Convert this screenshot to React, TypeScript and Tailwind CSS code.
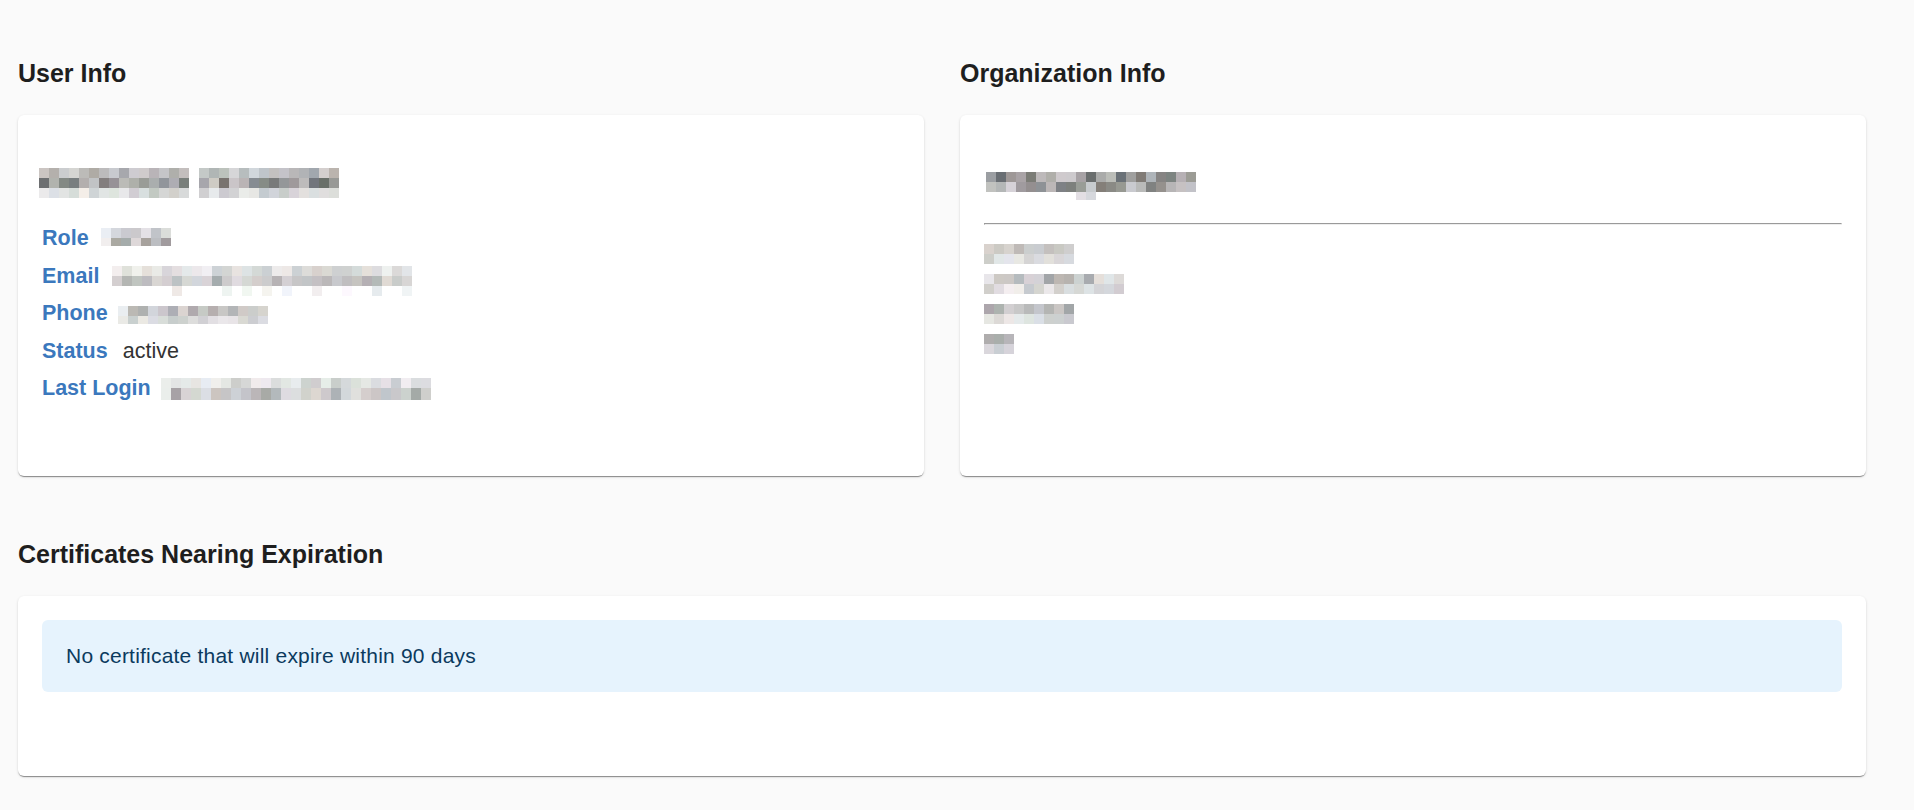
import React from "react";

function rng(seed: number) {
  let s = seed;
  return () => {
    s = (s * 9301 + 49297) % 233280;
    return s / 233280;
  };
}

type RowSpec = { h: number; lo: number; hi: number; p?: number; from?: number; to?: number; faintFirst?: boolean };

function Pix({ cols, rows, seed, gaps = [] }: { cols: number; rows: RowSpec[]; seed: number; gaps?: number[] }) {
  const r = rng(seed);
  const rects: React.ReactNode[] = [];
  let y = 0;
  rows.forEach((row, ri) => {
    for (let c = 0; c < cols; c++) {
      const v = row.lo + (row.hi - row.lo) * r();
      const t1 = r();
      const t2 = r();
      const pr = r();
      const from = row.from ?? 0;
      const to = row.to ?? cols;
      if (c < from || c >= to) continue;
      if (gaps.includes(c)) continue;
      if (pr > (row.p ?? 1)) continue;
      let g = Math.round(v);
      if (row.faintFirst && c === from) g = 238;
      const rr = Math.min(255, g + Math.round((t1 - 0.5) * 14));
      const bb = Math.min(255, g + Math.round((t2 - 0.5) * 14));
      rects.push(<rect key={`${ri}-${c}`} x={c * 10} y={y} width={10} height={row.h} fill={`rgb(${rr},${g},${bb})`} />);
    }
    y += row.h;
  });
  return (
    <svg width={cols * 10} height={y} className="block shrink-0">
      {rects}
    </svg>
  );
}

const shadow =
  "shadow-[0px_2px_1px_-1px_rgba(0,0,0,0.3),0px_1px_1px_0px_rgba(0,0,0,0.14),0px_1px_3px_0px_rgba(0,0,0,0.12)]";

function Label({ children }: { children: React.ReactNode }) {
  return <span className="text-[21.5px] font-bold leading-[37.5px] text-[#3b78bd] whitespace-nowrap">{children}</span>;
}

export default function App() {
  return (
    <div className="min-h-screen w-full bg-[#fafafa] pl-[18px] pr-[48px] pt-[58px] text-[#212121] font-['Liberation_Sans',Arial,sans-serif]">
      <div className="grid grid-cols-2 gap-x-[36px]">
        <div>
          <h2 className="text-[25px] font-bold leading-[30px] text-[#1e1e1e]">User Info</h2>
          <div className={`mt-[27px] h-[361px] rounded-[6px] bg-white pl-[21px] pt-[53px] ${shadow}`}>
            <Pix
              cols={30}
              seed={11}
              gaps={[15]}
              rows={[
                { h: 10, lo: 165, hi: 215 },
                { h: 10, lo: 110, hi: 205 },
                { h: 10, lo: 200, hi: 238 },
              ]}
            />
            <div className="mt-[22px] flex flex-col pl-[3px]">
              <div className="flex h-[37.5px] items-start">
                <Label>Role</Label>
                <div className="ml-[12px] mt-[8px]">
                  <Pix cols={7} seed={3} rows={[{ h: 10, lo: 185, hi: 230, faintFirst: true }, { h: 8, lo: 150, hi: 220, faintFirst: true }]} />
                </div>
              </div>
              <div className="flex h-[37.5px] items-start">
                <Label>Email</Label>
                <div className="ml-[13px] mt-[8.5px]">
                  <Pix
                    cols={30}
                    seed={5}
                    rows={[
                      { h: 10, lo: 205, hi: 242, faintFirst: true },
                      { h: 10, lo: 170, hi: 220 },
                      { h: 10, lo: 232, hi: 248, p: 0.3 },
                    ]}
                  />
                </div>
              </div>
              <div className="flex h-[37.5px] items-start">
                <Label>Phone</Label>
                <div className="ml-[10px] mt-[11px]">
                  <Pix cols={15} seed={9} rows={[{ h: 10, lo: 165, hi: 225, faintFirst: true }, { h: 8, lo: 205, hi: 240 }]} />
                </div>
              </div>
              <div className="flex h-[37.5px] items-start">
                <Label>Status</Label>
                <span className="ml-[15px] text-[21.5px] leading-[37.5px] text-[#333333]">active</span>
              </div>
              <div className="flex h-[37.5px] items-start">
                <Label>Last Login</Label>
                <div className="ml-[10px] mt-[7.7px]">
                  <Pix
                    cols={27}
                    seed={21}
                    rows={[
                      { h: 10, lo: 205, hi: 240, faintFirst: true },
                      { h: 12, lo: 160, hi: 230, faintFirst: true },
                    ]}
                  />
                </div>
              </div>
            </div>
          </div>
        </div>
        <div>
          <h2 className="text-[25px] font-bold leading-[30px] text-[#1e1e1e]">Organization Info</h2>
          <div className={`mt-[27px] h-[361px] rounded-[6px] bg-white px-[24px] pt-[57px] ${shadow}`}>
            <div className="ml-[2px]">
              <Pix
                cols={21}
                seed={33}
                rows={[
                  { h: 10, lo: 105, hi: 205, p: 0.97 },
                  { h: 10, lo: 125, hi: 215 },
                  { h: 8, lo: 200, hi: 230, from: 9, to: 11 },
                ]}
              />
            </div>
            <div className="mt-[23px] h-[2px] border-l border-t border-[#9a9a9a] border-b border-b-[#eeeeee] border-r border-r-[#eeeeee]" />
            <div className="mt-[19px] flex flex-col gap-[10px]">
              <Pix cols={9} seed={41} rows={[{ h: 10, lo: 180, hi: 215 }, { h: 10, lo: 205, hi: 235 }]} />
              <Pix cols={14} seed={43} rows={[{ h: 10, lo: 165, hi: 235 }, { h: 10, lo: 200, hi: 240 }]} />
              <Pix cols={9} seed={47} rows={[{ h: 10, lo: 160, hi: 225 }, { h: 10, lo: 200, hi: 235 }]} />
              <Pix cols={3} seed={49} rows={[{ h: 10, lo: 165, hi: 215 }, { h: 10, lo: 200, hi: 220 }]} />
            </div>
          </div>
        </div>
      </div>

      <h2 className="mt-[63px] text-[25px] font-bold leading-[30px] text-[#1e1e1e]">Certificates Nearing Expiration</h2>
      <div className={`mt-[27px] h-[180px] rounded-[6px] bg-white px-[24px] pt-[24px] ${shadow}`}>
        <div className="flex h-[72px] items-center rounded-[6px] bg-[#e6f3fd] pl-[24px]">
          <span className="text-[21px] leading-[31.5px] tracking-[0.01em] text-[#0b3a5e]">
            No certificate that will expire within 90 days
          </span>
        </div>
      </div>
    </div>
  );
}
